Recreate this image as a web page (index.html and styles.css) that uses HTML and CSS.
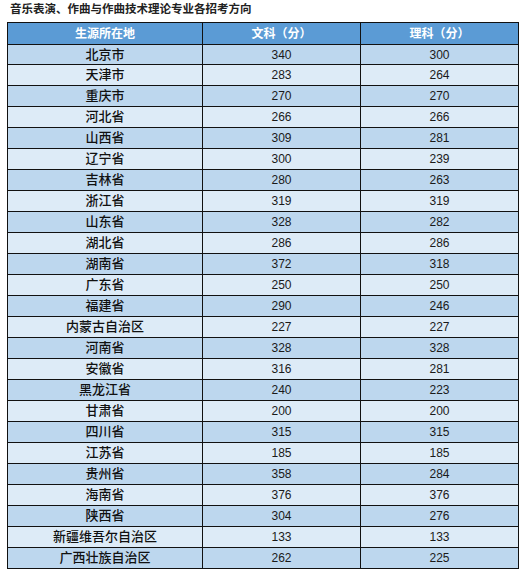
FILE: index.html
```html
<!DOCTYPE html>
<html lang="zh">
<head>
<meta charset="utf-8">
<title>音乐表演、作曲与作曲技术理论专业各招考方向</title>
<link rel="stylesheet" href="styles.css">
</head>
<body>
<div class="page">
  <h1 class="title">音乐表演、作曲与作曲技术理论专业各招考方向</h1>
  <table class="scores">
    <colgroup>
      <col class="c-region">
      <col class="c-num">
      <col class="c-num">
    </colgroup>
    <thead>
      <tr><th>生源所在地</th><th>文科（分）</th><th>理科（分）</th></tr>
    </thead>
    <tbody>
      <tr><td>北京市</td><td>340</td><td>300</td></tr>
      <tr><td>天津市</td><td>283</td><td>264</td></tr>
      <tr><td>重庆市</td><td>270</td><td>270</td></tr>
      <tr><td>河北省</td><td>266</td><td>266</td></tr>
      <tr><td>山西省</td><td>309</td><td>281</td></tr>
      <tr><td>辽宁省</td><td>300</td><td>239</td></tr>
      <tr><td>吉林省</td><td>280</td><td>263</td></tr>
      <tr><td>浙江省</td><td>319</td><td>319</td></tr>
      <tr><td>山东省</td><td>328</td><td>282</td></tr>
      <tr><td>湖北省</td><td>286</td><td>286</td></tr>
      <tr><td>湖南省</td><td>372</td><td>318</td></tr>
      <tr><td>广东省</td><td>250</td><td>250</td></tr>
      <tr><td>福建省</td><td>290</td><td>246</td></tr>
      <tr><td>内蒙古自治区</td><td>227</td><td>227</td></tr>
      <tr><td>河南省</td><td>328</td><td>328</td></tr>
      <tr><td>安徽省</td><td>316</td><td>281</td></tr>
      <tr><td>黑龙江省</td><td>240</td><td>223</td></tr>
      <tr><td>甘肃省</td><td>200</td><td>200</td></tr>
      <tr><td>四川省</td><td>315</td><td>315</td></tr>
      <tr><td>江苏省</td><td>185</td><td>185</td></tr>
      <tr><td>贵州省</td><td>358</td><td>284</td></tr>
      <tr><td>海南省</td><td>376</td><td>376</td></tr>
      <tr><td>陕西省</td><td>304</td><td>276</td></tr>
      <tr><td>新疆维吾尔自治区</td><td>133</td><td>133</td></tr>
      <tr><td>广西壮族自治区</td><td>262</td><td>225</td></tr>
    </tbody>
  </table>
</div>
</body>
</html>
```
FILE: styles.css
```css
html, body {
  margin: 0;
  padding: 0;
  background: #ffffff;
}

.page {
  padding: 0 0 0 7px;
  font-family: "Liberation Sans", "Noto Sans CJK SC", sans-serif;
  color: #1a1a1a;
}

.title {
  margin: 0;
  padding: 2px 0 0 3px;
  height: 22px;
  box-sizing: border-box;
  font-size: 11.5px;
  line-height: 14px;
  font-weight: bold;
  color: #222;
}

.scores {
  border-collapse: collapse;
  table-layout: fixed;
  width: 512px;
  font-size: 12px;
}

.c-region { width: 195px; }
.c-num { width: 158px; }

.scores th,
.scores td {
  border: 1px solid #111;
  padding: 0;
  text-align: center;
  vertical-align: middle;
  line-height: 14px;
}

.scores thead tr { height: 22px; }
.scores th {
  background: #5b9bd5;
  color: #ffffff;
  font-weight: bold;
  font-size: 12px;
}

.scores tbody tr { height: 21px; }
.scores tbody tr:first-child { height: 20px; }
.scores tbody tr:nth-child(odd) td { background: #bdd7ee; }
.scores tbody tr:nth-child(even) td { background: #ddebf7; }

.scores td:first-child {
  font-size: 13px;
  font-weight: 500;
  color: #111;
}
```
